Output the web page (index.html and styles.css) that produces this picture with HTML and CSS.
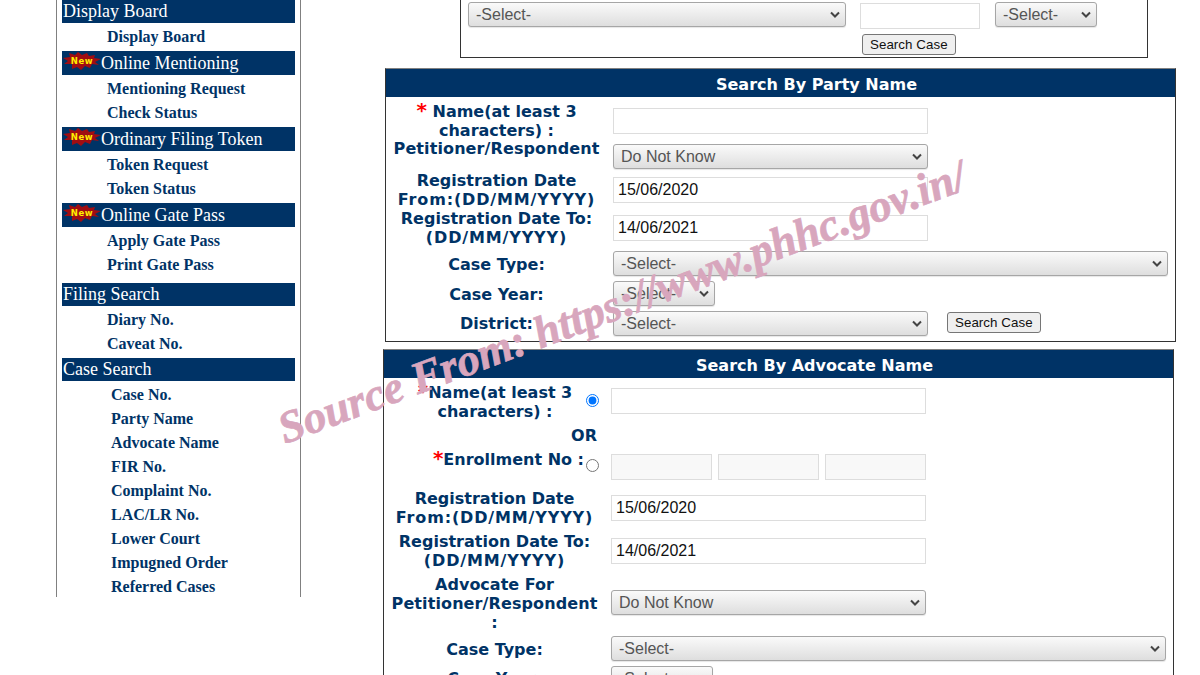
FILE: index.html
```html
<!DOCTYPE html>
<html lang="en">
<head>
<meta charset="utf-8">
<title>Case Search</title>
<link rel="stylesheet" href="styles.css">
</head>
<body>
<div class="page">
  <aside class="sidebar">
    <h3 class="side-head first">Display Board</h3>
    <ul class="links"><li>Display Board</li></ul>
    <h3 class="side-head"><svg class="badge" viewBox="0 0 38 18"><polygon points="0,6 7,5 6,1 12,3 15,0 19,3 24,1 26,4 32,3 31,6 38,7 32,10 36,13 29,12 27,16 22,14 18,18 14,15 9,17 9,12 1,12 5,9" fill="#a00d12"/><text x="19" y="12" class="badge-text">New</text></svg>Online Mentioning</h3>
    <ul class="links"><li>Mentioning Request</li><li>Check Status</li></ul>
    <h3 class="side-head"><svg class="badge" viewBox="0 0 38 18"><polygon points="0,6 7,5 6,1 12,3 15,0 19,3 24,1 26,4 32,3 31,6 38,7 32,10 36,13 29,12 27,16 22,14 18,18 14,15 9,17 9,12 1,12 5,9" fill="#a00d12"/><text x="19" y="12" class="badge-text">New</text></svg>Ordinary Filing Token</h3>
    <ul class="links"><li>Token Request</li><li>Token Status</li></ul>
    <h3 class="side-head"><svg class="badge" viewBox="0 0 38 18"><polygon points="0,6 7,5 6,1 12,3 15,0 19,3 24,1 26,4 32,3 31,6 38,7 32,10 36,13 29,12 27,16 22,14 18,18 14,15 9,17 9,12 1,12 5,9" fill="#a00d12"/><text x="19" y="12" class="badge-text">New</text></svg>Online Gate Pass</h3>
    <ul class="links"><li>Apply Gate Pass</li><li>Print Gate Pass</li></ul>
    <h3 class="side-head gap-b">Filing Search</h3>
    <ul class="links"><li>Diary No.</li><li>Caveat No.</li></ul>
    <h3 class="side-head short">Case Search</h3>
    <ul class="links wide"><li>Case No.</li><li>Party Name</li><li>Advocate Name</li><li>FIR No.</li><li>Complaint No.</li><li>LAC/LR No.</li><li>Lower Court</li><li>Impugned Order</li><li>Referred Cases</li></ul>
  </aside>

  <main class="main">
    <section class="top-box">
      <div class="top-row">
        <select class="sel sel-top"><option>-Select-</option></select>
        <input class="txt txt-top" type="text">
        <select class="sel sel-small"><option>-Select-</option></select>
      </div>
      <button class="btn btn-top" type="button">Search Case</button>
    </section>

    <section class="box party">
      <h2 class="box-head">Search By Party Name</h2>
      <div class="form form-party">
        <div class="lbl"><span class="req">*</span> Name(at least 3 characters) :</div>
        <div class="ctl"><input class="txt w315" type="text"></div>
        <div class="lbl top wide-l">Petitioner/Respondent</div>
        <div class="ctl top-ctl"><select class="sel w315"><option>Do Not Know</option></select></div>
        <div class="lbl">Registration Date<br><span class="date">From:(DD/MM/YYYY)</span></div>
        <div class="ctl"><input class="txt w315" type="text" value="15/06/2020"></div>
        <div class="lbl">Registration Date To:<br><span class="date">(DD/MM/YYYY)</span></div>
        <div class="ctl"><input class="txt w315" type="text" value="14/06/2021"></div>
        <div class="lbl nudge">Case Type:</div>
        <div class="ctl"><select class="sel w555"><option>-Select-</option></select></div>
        <div class="lbl nudge">Case Year:</div>
        <div class="ctl"><select class="sel w102"><option>-Select-</option></select></div>
        <div class="lbl">District:</div>
        <div class="ctl with-btn"><select class="sel w315"><option>-Select-</option></select><button class="btn btn-up" type="button">Search Case</button></div>
      </div>
    </section>

    <section class="box advocate">
      <h2 class="box-head">Search By Advocate Name</h2>
      <div class="form form-adv">
        <div class="lbl radio-lbl"><span class="lbl-text"><span class="req">*</span>Name(at least 3 characters) :</span><input class="radio radio-up" type="radio" name="by" checked></div>
        <div class="ctl up"><input class="txt w315" type="text"></div>
        <div class="lbl or">OR</div>
        <div class="ctl"></div>
        <div class="lbl radio-lbl enroll"><span class="lbl-text"><span class="req">*</span>Enrollment No :</span><input class="radio" type="radio" name="by"></div>
        <div class="ctl triple"><input class="txt off" type="text" disabled><input class="txt off" type="text" disabled><input class="txt off" type="text" disabled></div>
        <div class="lbl">Registration Date<br><span class="date">From:(DD/MM/YYYY)</span></div>
        <div class="ctl"><input class="txt w315" type="text" value="15/06/2020"></div>
        <div class="lbl">Registration Date To:<br><span class="date">(DD/MM/YYYY)</span></div>
        <div class="ctl"><input class="txt w315" type="text" value="14/06/2021"></div>
        <div class="lbl">Advocate For<br><span class="wide-l">Petitioner/Respondent</span><br>:</div>
        <div class="ctl up"><select class="sel w315"><option>Do Not Know</option></select></div>
        <div class="lbl">Case Type:</div>
        <div class="ctl up"><select class="sel w555"><option>-Select-</option></select></div>
        <div class="lbl">Case Year:</div>
        <div class="ctl start"><select class="sel w102"><option>-Select-</option></select></div>
      </div>
    </section>
  </main>

  <div class="watermark">Source From: https://www.phhc.gov.in/</div>
</div>
</body>
</html>
```
FILE: styles.css
```css
* { box-sizing: border-box; }
html, body { margin: 0; padding: 0; height: 675px; overflow: hidden; background: #fff; }
.page { position: relative; display: flex; height: 675px; overflow: hidden; align-items: flex-start; }

.sidebar {
  width: 245px; height: 597px; margin-left: 56px; padding: 0 5px;
  border-left: 1px solid #808080; border-right: 1px solid #808080;
  font-family: "Liberation Serif", serif; color: #003366; flex: none; overflow: hidden;
}
.side-head {
  margin: 0; height: 24px; background: #003366; color: #fff;
  font-family: "Liberation Serif", serif; font-size: 18px; font-weight: normal; line-height: 24px;
  display: flex; align-items: center; padding-left: 1px; white-space: nowrap;
}
.side-head.first { height: 23px; line-height: 23px; }
.side-head.gap-b { margin-top: 4px; height: 23px; padding-bottom: 2px; }
.side-head.short { height: 23px; padding-bottom: 2px; }
.badge { width: 38px; height: 18px; margin-top: -4px; flex: none; }
.badge-text { font-family: "DejaVu Sans", sans-serif; font-size: 8.5px; font-weight: bold; fill: #ffee00; text-anchor: middle; letter-spacing: .6px; }
.links { list-style: none; margin: 0; padding: 2px 0 2px 45px; }
.links.wide { padding-left: 49px; }
.links li { height: 24px; line-height: 24px; font-size: 16px; font-weight: bold; white-space: nowrap; }

.main { width: 900px; flex: none; }

.top-box {
  width: 688px; height: 58px; margin: 0 0 10px 159px;
  border: 1px solid #333; border-top: 0; padding: 2px 0 0 7px;
}
.top-row { display: flex; align-items: flex-start; }
.btn-top { display: block; margin: 5px 0 0 394px; }
.sel-top { width: 378px; }
.txt-top { width: 120px; margin: 1px 15px 0 14px; }
.sel-small { width: 102px; }

.sel {
  appearance: none; -webkit-appearance: none; display: block; height: 25px; padding: 0 20px 0 7px;
  border: 1px solid #a6a6a6; border-radius: 3px; color: #555;
  font-family: "Liberation Sans", sans-serif; font-size: 16px;
  background-color: #efefef;
  background-image: url("data:image/svg+xml,%3Csvg xmlns='http://www.w3.org/2000/svg' width='10' height='7'%3E%3Cpath d='M1 1.5l4 4 4-4' fill='none' stroke='%23444' stroke-width='2'/%3E%3C/svg%3E"), linear-gradient(#fafafa, #dedede);
  background-repeat: no-repeat, no-repeat;
  background-position: right 5px center, 0 0;
  box-shadow: 0 1px 1px rgba(0,0,0,.1);
}
.txt {
  display: block; height: 26px; padding: 0 4px; border: 1px solid #ddd; background: #fff; color: #111;
  font-family: "Liberation Sans", sans-serif; font-size: 16px;
}
.off { width: 101px; background: #f8f8f8; }
.btn {
  height: 21px; padding: 0 7px; border: 1px solid #767676; border-radius: 3px; background: #efefef; color: #111;
  font-family: "Liberation Sans", sans-serif; font-size: 13.33px; letter-spacing: .05px; line-height: 17px; white-space: nowrap;
}
.btn-up { margin-bottom: 2px; }
.w315 { width: 315px; }
.w555 { width: 555px; }
.w102 { width: 102px; }

.box { border: 1px solid #333; border-top: 1px solid #808080; }
.party { width: 791px; height: 274px; margin: 0 0 7px 84px; }
.advocate { width: 791px; height: 340px; margin-left: 82px; }
.box-head {
  margin: 0; height: 28px; padding-left: 72px; background: #003366; color: #fff; text-align: center;
  font-family: "DejaVu Sans", sans-serif; font-size: 16px; font-weight: bold; line-height: 31px;
}
.form { display: grid; grid-template-columns: 221px 1fr; column-gap: 6px; align-items: center; }
.form-party { padding-top: 5px; grid-template-rows: 37px 32px 38px 38px 33px 27px 33px; }
.form-adv { padding-top: 2px; grid-template-rows: 44px 22px 42px 39px 47px 58px 34px 24px; }
.lbl {
  font-family: "DejaVu Sans", sans-serif; font-size: 16px; font-weight: bold; line-height: 19px;
  color: #003366; text-align: center;
}
.lbl.top { align-self: start; }
.nudge { padding-top: 2px; }
.date { letter-spacing: .85px; }
.wide-l { letter-spacing: .1px; }
.top-ctl { align-self: start; padding-top: 5px; }
.start { align-self: start; }
.up { padding-bottom: 2px; }
.req { color: #f00; font-size: 20px; line-height: 0; }
.with-btn { display: flex; align-items: center; gap: 19px; }
.triple { display: flex; gap: 6px; }
.radio-lbl { display: flex; align-items: center; padding-left: 20px; }
.lbl-text { width: 182px; flex: none; }
.radio { width: 13px; height: 13px; margin: 0; flex: none; }
.radio-up { margin-bottom: 4px; }
.enroll { align-self: start; }
.enroll .lbl-text { text-align: right; padding-right: 2px; }
.enroll .radio { margin-top: 13px; }
.or { text-align: right; padding-right: 8px; }

.watermark {
  position: absolute; left: 280px; top: 408px; transform: rotate(-20.5deg); transform-origin: 0 50%;
  font-family: "Liberation Serif", serif; font-style: italic; font-weight: bold; font-size: 45px;
  -webkit-text-stroke: .7px #d8a6bd; color: #d8a6bd; white-space: nowrap; line-height: 1;
}
```
